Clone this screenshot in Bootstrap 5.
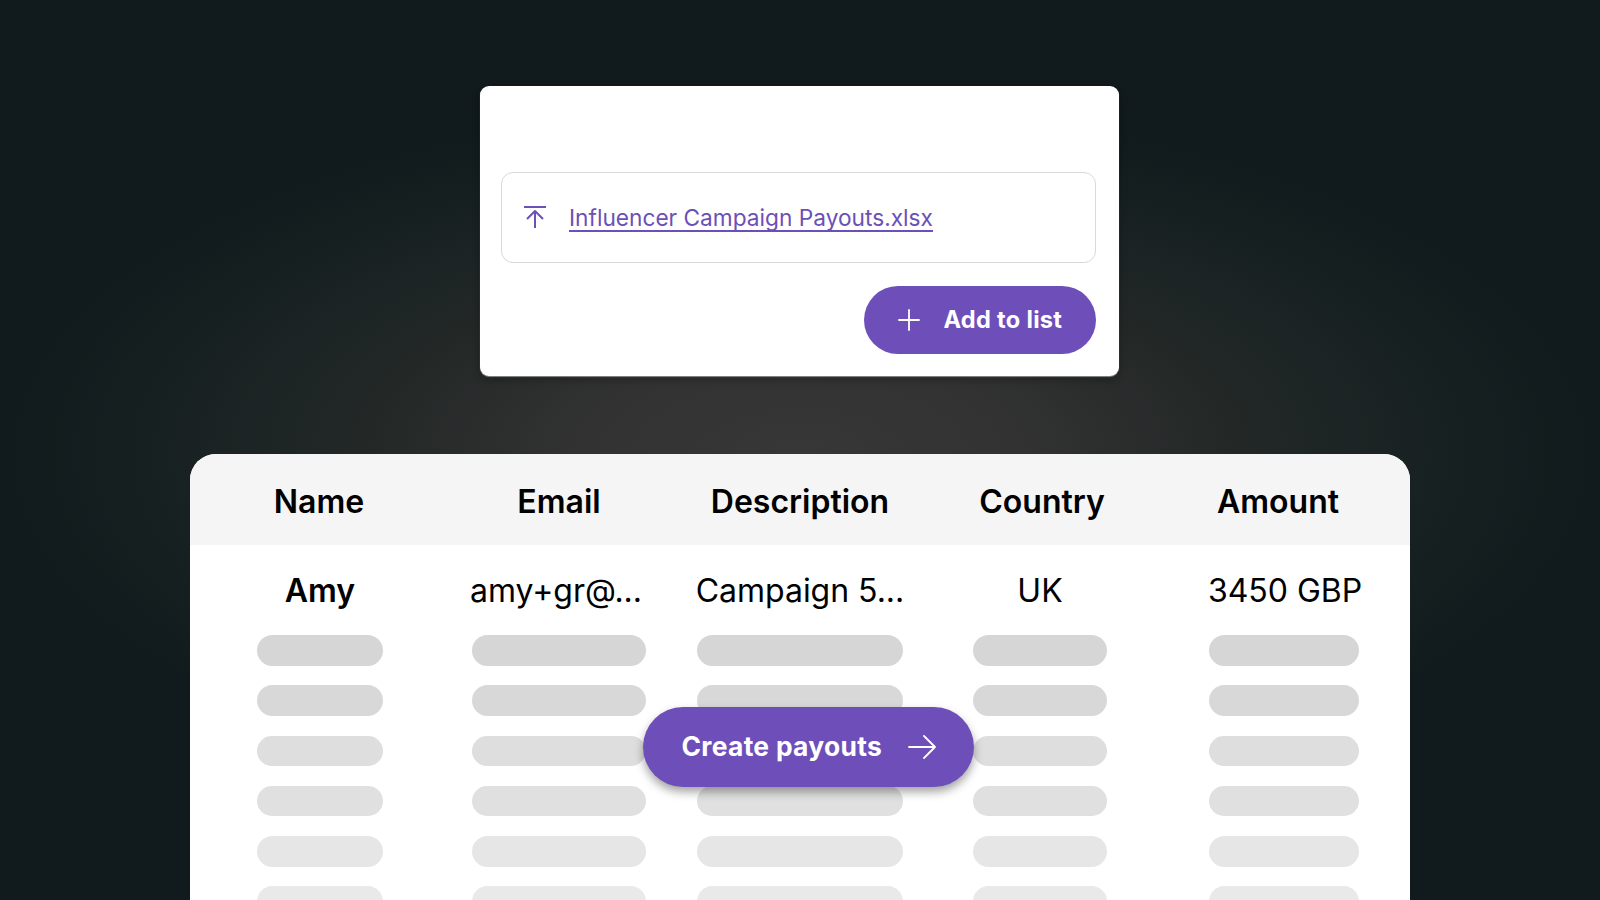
<!DOCTYPE html>
<html lang="en">
<head>
<meta charset="utf-8">
<title>Create payouts</title>
<link rel="stylesheet" href="https://cdn.jsdelivr.net/npm/bootstrap@5.3.0/dist/css/bootstrap.min.css">
<style>
html,body{height:100%;}
body{font-family:Inter,"Liberation Sans",sans-serif;color:#000;overflow:hidden;
  background:#111a1c radial-gradient(ellipse 790px 350px at 800px 455px,#373737 0%,#323232 28%,#232827 55%,#182122 80%,#111a1c 100%);}
.stage{height:900px;padding:86px 190px 0;overflow:hidden;}
.upload-card{width:638.5px;height:290px;margin-right:1.5px;padding:85.5px 23px 22px 21px;border:0;border-radius:9px;box-shadow:0 1px 1px #8a8a8a,0 3px 8px rgba(0,0,0,.3);}
.file-box{height:91px;padding:0 22px;gap:23px;border:1.5px solid #d9d9d9;border-radius:12px;}
.file-ink{color:#6c4fb7;}
.file-link{font-size:22.7px;line-height:28px;color:#6c4fb7;text-decoration-thickness:1.5px;text-decoration-skip-ink:none;text-underline-offset:4px;padding-top:1px;}
.btn-violet{background:#6e4fba;color:#fff;border:0;font-weight:700;}
.btn-violet:hover,.btn-violet:focus{background:#6e4fba;color:#fff;}
.btn-add{width:232px;height:68px;margin-top:23px;padding:1px 0 0 34.5px;gap:23.5px;font-size:23.6px;letter-spacing:.3px;}
.sheet{height:560px;margin-top:78px;border-radius:26px 26px 0 0;overflow:hidden;}
.tbl-grid{grid-template-columns:260px 218px 264px 216px 262px;justify-items:center;align-items:center;}
.tbl-head{height:91px;padding-top:5px;background:#f5f5f5;font-size:32px;font-weight:600;}
.tbl-first{height:90px;font-size:32px;padding-top:2px;letter-spacing:-.02px;}
.tbl-first b{font-weight:600;}
.ln-name{margin-right:2px;}
.ln-country{margin-left:4px;}
.ln-mail{margin-right:6px;}
.amt-head{margin-right:2px;}
.amt-cell{margin-left:9px;}
.amt-text{margin-left:12px;}
.tbl-bars{height:30.5px;margin-bottom:19.8px;}
.ph{display:block;height:100%;border-radius:16px;background:var(--ph);}
.w-a{width:126px;}.w-b{width:174px;}.w-c{width:206px;}.w-d{width:134px;}.w-e{width:150px;}
.shade1{--ph:#d6d6d6;}.shade2{--ph:#d8d8d8;}.shade3{--ph:#dedede;}.shade4{--ph:#e0e0e0;}.shade5{--ph:#e6e6e6;}.shade6{--ph:#e9e9e9;}
.btn-payouts{left:453px;top:253px;width:331px;height:80px;padding:0 0 0 38.5px;gap:26px;font-size:26.4px;letter-spacing:.3px;box-shadow:0 5px 10px rgba(0,0,0,.36);}
.ico{flex:none;fill:none;stroke:currentColor;stroke-width:1.8;stroke-linecap:round;stroke-linejoin:round;}
.ico-up{stroke-width:2;}
</style>
</head>
<body>
<main class="stage">
  <div class="d-flex justify-content-center">
    <section class="card upload-card">
      <div class="file-box d-flex align-items-center">
        <svg class="ico ico-up file-ink" width="22" height="22" viewBox="0 0 22 22" aria-hidden="true"><path stroke-linecap="butt" d="M0 1H22M11 22V5M3 13L11 5L19 13"/></svg>
        <a class="file-link" href="#">Influencer Campaign Payouts.xlsx</a>
      </div>
      <div class="d-flex justify-content-end">
        <button class="btn btn-violet btn-add rounded-pill d-flex align-items-center" type="button">
          <svg class="ico" width="22" height="22" viewBox="0 0 22 22" aria-hidden="true"><path d="M11 1V21M1 11H21"/></svg>
          <span>Add to list</span>
        </button>
      </div>
    </section>
  </div>
  <section class="sheet bg-white position-relative">
    <div class="tbl-grid tbl-head d-grid">
      <div class="ln-name">Name</div><div>Email</div><div>Description</div><div class="ln-country">Country</div><div class="amt-head">Amount</div>
    </div>
    <div class="tbl-grid tbl-first d-grid">
      <b>Amy</b><div class="ln-mail">amy+gr@...</div><div>Campaign 5...</div><div>UK</div><div class="amt-text">3450 GBP</div>
    </div>
    <div class="tbl-grid tbl-bars d-grid shade1"><span class="ph w-a"></span><span class="ph w-b"></span><span class="ph w-c"></span><span class="ph w-d"></span><span class="ph w-e amt-cell"></span></div>
    <div class="tbl-grid tbl-bars d-grid shade2"><span class="ph w-a"></span><span class="ph w-b"></span><span class="ph w-c"></span><span class="ph w-d"></span><span class="ph w-e amt-cell"></span></div>
    <div class="tbl-grid tbl-bars d-grid shade3"><span class="ph w-a"></span><span class="ph w-b"></span><span class="ph w-c"></span><span class="ph w-d"></span><span class="ph w-e amt-cell"></span></div>
    <div class="tbl-grid tbl-bars d-grid shade4"><span class="ph w-a"></span><span class="ph w-b"></span><span class="ph w-c"></span><span class="ph w-d"></span><span class="ph w-e amt-cell"></span></div>
    <div class="tbl-grid tbl-bars d-grid shade5"><span class="ph w-a"></span><span class="ph w-b"></span><span class="ph w-c"></span><span class="ph w-d"></span><span class="ph w-e amt-cell"></span></div>
    <div class="tbl-grid tbl-bars d-grid shade6"><span class="ph w-a"></span><span class="ph w-b"></span><span class="ph w-c"></span><span class="ph w-d"></span><span class="ph w-e amt-cell"></span></div>
    <button class="btn btn-violet btn-payouts rounded-pill position-absolute d-flex align-items-center" type="button">
      <span>Create payouts</span>
      <svg class="ico" width="28" height="24" viewBox="0 0 28 24" aria-hidden="true"><path d="M1 12H27M16 1L27 12L16 23"/></svg>
    </button>
  </section>
</main>
<script src="https://cdn.jsdelivr.net/npm/bootstrap@5.3.0/dist/js/bootstrap.bundle.min.js"></script>
</body>
</html>
